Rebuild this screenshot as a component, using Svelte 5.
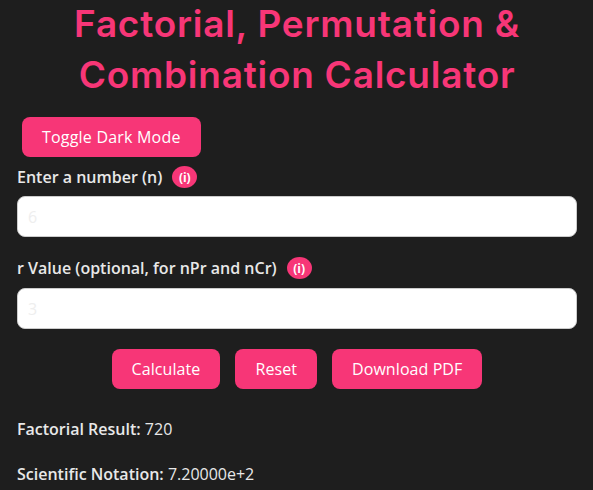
<script>
  let n = $state("");
  let r = $state("");
</script>

<main class="calc">
  <h1>Factorial, Permutation &amp; Combination Calculator</h1>
  <button class="btn toggle">Toggle Dark Mode</button>

  <div class="field first">
    <label for="n">Enter a number (n) <span class="info">(i)</span></label>
    <input id="n" type="number" placeholder="6" bind:value={n} />
  </div>
  <div class="field">
    <label for="r">r Value (optional, for nPr and nCr) <span class="info">(i)</span></label>
    <input id="r" type="number" placeholder="3" bind:value={r} />
  </div>

  <div class="actions">
    <button class="btn">Calculate</button>
    <button class="btn">Reset</button>
    <button class="btn">Download PDF</button>
  </div>

  <p class="result"><strong>Factorial Result:</strong> 720</p>
  <p class="result"><strong>Scientific Notation:</strong> 7.20000e+2</p>
</main>

<style>
  :global(body) {
    background: #1e1e1e;
    overflow: hidden;
  }

  .calc {
    height: 490px;
    padding: 0 16px 0 17px;
    box-sizing: border-box;
    overflow: hidden;
    color: #e8e8e8;
    font-family: "Open Sans", "Noto Sans", sans-serif;
    font-size: 16px;
  }

  h1 {
    margin: -2px 0 17px;
    color: #f73677;
    font-family: Inter, sans-serif;
    font-size: 37px;
    font-weight: 600;
    letter-spacing: 0.75px;
    line-height: 51px;
    text-align: center;
  }

  .btn {
    height: 40px;
    padding: 0 20px;
    border: 0;
    border-radius: 8px;
    background: #f73677;
    color: #fff;
    font: inherit;
    letter-spacing: 0.08px;
  }

  .toggle {
    display: block;
    margin-left: 5px;
    letter-spacing: 0.2px;
  }

  .field {
    margin-top: 19px;
  }

  .field.first {
    margin-top: 8px;
  }

  label {
    display: flex;
    align-items: center;
    gap: 10px;
    height: 24px;
    margin-bottom: 7px;
    font-size: 16px;
    font-weight: 600;
  }

  .field:not(.first) label {
    margin-bottom: 8px;
  }

  .info {
    display: inline-flex;
    align-items: center;
    justify-content: center;
    width: 25px;
    height: 22px;
    border-radius: 50%;
    background: #f73677;
    color: #fff;
    font-size: 12px;
    font-weight: 700;
  }

  input {
    display: block;
    width: 100%;
    height: 41px;
    padding: 0 10px;
    box-sizing: border-box;
    border: 1px solid #ccc;
    border-radius: 8px;
    background: #fff;
    font: inherit;
  }

  input::placeholder {
    color: #eee;
  }

  .actions {
    display: flex;
    justify-content: center;
    gap: 15px;
    margin-top: 20px;
  }

  .result {
    margin: 21px 0 0;
    height: 24px;
    line-height: 24px;
  }

  .result strong {
    font-weight: 600;
  }

  .actions + .result {
    margin-top: 28px;
  }
</style>
